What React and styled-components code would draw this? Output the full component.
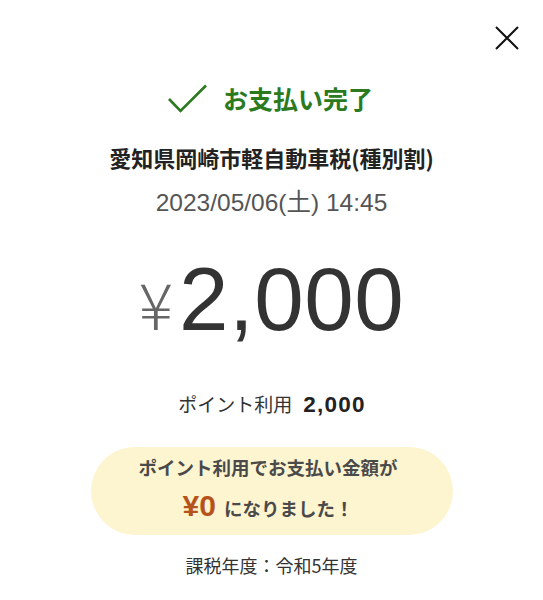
import React from 'react'
import styled, { createGlobalStyle } from 'styled-components'

const GlobalStyle = createGlobalStyle`
  body {
    margin: 0;
    background: #fff;
    font-family: "Liberation Sans", "Noto Sans CJK JP", sans-serif;
    color: #222;
  }
`

function App() {
  return (
    <Page>
      <GlobalStyle />
      <TopBar>
        <CloseButton aria-label="close">
          <svg width="26" height="26" viewBox="0 0 26 26">
            <path d="M2 2 L24 24 M24 2 L2 24" stroke="#111" strokeWidth="2" fill="none" />
          </svg>
        </CloseButton>
      </TopBar>
      <Status>
        <svg width="39" height="29" viewBox="0 0 39 29">
          <path d="M1 15 L12.5 27 L38 1.5" stroke="#2b7a1e" strokeWidth="2.6" fill="none" />
        </svg>
        <span>お支払い完了</span>
      </Status>
      <Title>愛知県岡崎市軽自動車税(種別割)</Title>
      <DateText>2023/05/06(土) 14:45</DateText>
      <Amount>
        <Yen>¥</Yen>
        <Value>2,000</Value>
      </Amount>
      <Points>
        ポイント利用<b>2,000</b>
      </Points>
      <Notice>
        <NoticeLine>ポイント利用でお支払い金額が</NoticeLine>
        <NoticeLine $tall>
          <Zero>¥0</Zero> になりました！
        </NoticeLine>
      </Notice>
      <TaxYear>課税年度：令和5年度</TaxYear>
    </Page>
  )
}

export default App

const Page = styled.div`
  width: 543px;
  height: 600px;
  display: flex;
  flex-direction: column;
  align-items: center;
  overflow: hidden;
`
const TopBar = styled.div`
  align-self: stretch;
  display: flex;
  justify-content: flex-end;
  padding: 25px 23px 0 0;
`
const CloseButton = styled.div`
  width: 26px;
  height: 26px;
  svg { display: block; }
`
const Status = styled.div`
  display: flex;
  align-items: center;
  gap: 16px;
  margin-top: 32px;
  margin-right: 2px;
  height: 30px;
  line-height: 30px;
  color: #2b7a1e;
  font-family: "Noto Sans CJK JP", sans-serif;
  font-weight: 700;
  font-size: 25px;
  svg { display: block; }
`
const Title = styled.div`
  margin-top: 29px;
  line-height: 30px;
  font-family: "Noto Sans CJK JP", sans-serif;
  font-weight: 700;
  font-size: 22px;
  color: #222;
`
const DateText = styled.div`
  margin-top: 16px;
  line-height: 30px;
  font-size: 24.5px;
  color: #555;
  font-family: "Liberation Sans", "Noto Sans CJK JP", sans-serif;
`
const Amount = styled.div`
  display: flex;
  align-items: baseline;
  gap: 6px;
  margin-top: 31px;
  height: 100px;
  line-height: 100px;
`
const Yen = styled.span`
  font-family: "Noto Sans CJK JP", sans-serif;
  font-weight: 300;
  font-size: 64px;
  color: #666;
`
const Value = styled.span`
  font-family: "Liberation Sans", sans-serif;
  font-size: 89px;
  color: #333;
  letter-spacing: 0.5px;
`
const Points = styled.div`
  margin-top: 40px;
  margin-left: 1px;
  line-height: 30px;
  font-family: "Noto Sans CJK JP", sans-serif;
  font-size: 19px;
  color: #333;
  b {
    margin-left: 11px;
    font-family: "Liberation Sans", sans-serif;
    font-size: 22.5px;
    letter-spacing: 1.2px;
    color: #222;
  }
`
const Notice = styled.div`
  margin-top: 27px;
  margin-left: 1px;
  width: 362px;
  height: 88px;
  box-sizing: border-box;
  padding: 7px 8px 0 0;
  border-radius: 44px;
  background: #fdf4d0;
  display: flex;
  flex-direction: column;
  align-items: center;
  gap: 6px;
`
const NoticeLine = styled.div`
  font-family: "Noto Sans CJK JP", sans-serif;
  font-weight: 700;
  font-size: 18.5px;
  line-height: ${p => (p.$tall ? '40px' : '26px')};
  color: #4a4a4a;
  display: flex;
  align-items: baseline;
  gap: 8px;
`
const Zero = styled.span`
  font-family: "Liberation Sans", sans-serif;
  font-size: 30px;
  color: #b5531a;
`
const TaxYear = styled.div`
  margin-top: 18px;
  line-height: 24px;
  font-family: "Noto Sans CJK JP", sans-serif;
  font-size: 18px;
  color: #333;
`
